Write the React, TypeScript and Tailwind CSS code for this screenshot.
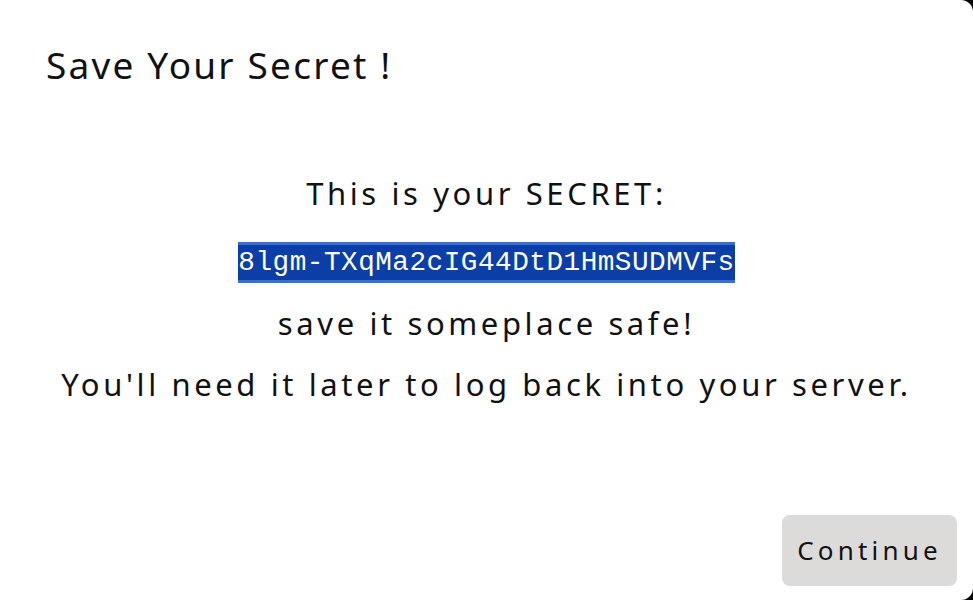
import React from 'react';

const secret = '8lgm-TXqMa2cIG44DtD1HmSUDMVFs';

export default function App() {
    return (
        <div className="h-screen w-full bg-black">
            <div
                className="flex h-full w-full flex-col rounded-r-[12px] bg-white text-[#111]"
                style={{ fontFamily: '"Noto Sans", "Open Sans", sans-serif' }}
            >
                <h1 className="pl-[46px] pt-[41px] text-[37px] leading-[48px] font-normal tracking-[2.2px]">Save Your Secret !</h1>

                <div className="mt-[72px] flex flex-col items-center text-[31px] tracking-[3.6px]">
                    <p className="leading-[64px]">This is your SECRET:</p>
                    <p className="leading-[66px] tracking-normal">
                        <span
                            className="border-y-[3px] border-[#3a6fd0] bg-[#0b3ea6] py-[2px] text-[27.7px] leading-[34px] tracking-[0.5px] text-white"
                            style={{ fontFamily: '"Liberation Mono", monospace' }}
                        >
                            {secret}
                        </span>
                    </p>
                    <p className="leading-[64px]">save it someplace safe!</p>
                    <p className="leading-[58px]">You'll need it later to log back into your server.</p>
                </div>

                <div className="mt-auto flex justify-end pb-[14px] pr-[16px]">
                    <button
                        type="button"
                        className="h-[71px] w-[175px] rounded-[8px] bg-[#dcdbda] text-[26px] tracking-[4.2px] text-[#111]"
                    >
                        Continue
                    </button>
                </div>
            </div>
        </div>
    );
}
